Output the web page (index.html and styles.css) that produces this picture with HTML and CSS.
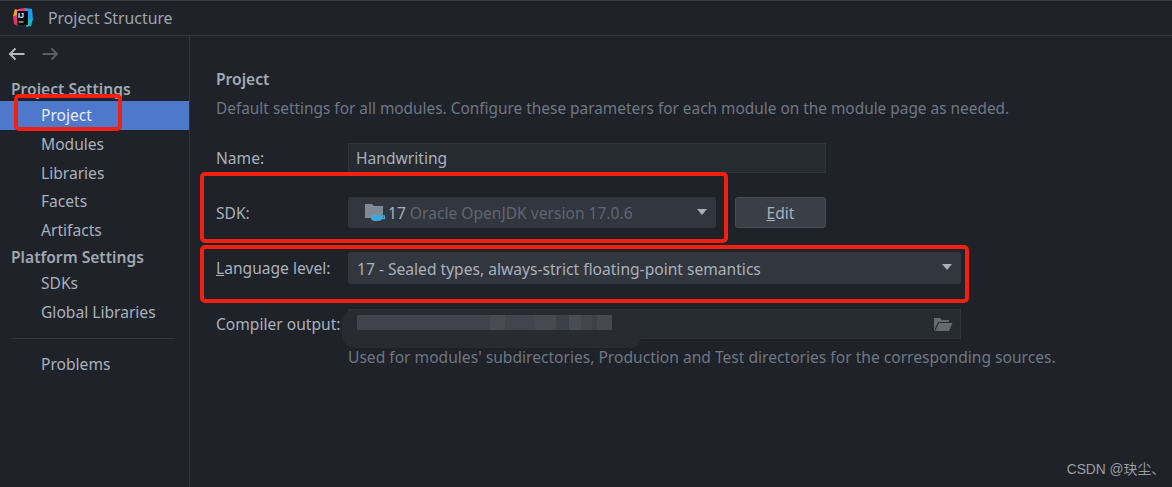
FILE: index.html
```html
<!DOCTYPE html>
<html lang="en">
  <head>
    <meta charset="UTF-8" />
    <title>Project Structure</title>
    <link rel="stylesheet" href="styles.css">
  </head>
  <body>
    <header class="titlebar">
      <svg class="app-logo" width="22" height="22" viewBox="0 0 22 22">
        <path d="M6 2 L14 1 L17 5 L5 8 Z" fill="#f5327f" />
        <path d="M3 2 L8 4 L5 11 L1 9 Z" fill="#f9a11b" />
        <path d="M1 9 L6 8 L6 19 L2 17 Z" fill="#ee2f6f" />
        <path d="M13 1 L20 2 L21 13 L15 12 Z" fill="#1b9cf2" />
        <path d="M15 11 L21 12 L19 19 L14 20 Z" fill="#16b5c9" />
        <rect x="5" y="4" width="11" height="14" fill="#0a0a0a" />
        <text class="logo-text" x="6" y="11">IJ</text>
        <rect x="6.5" y="14.5" width="5" height="1" fill="#e8e8e8" />
      </svg>
      <span class="title-text">Project Structure</span>
    </header>

    <div class="window">
      <aside class="sidebar">
        <div class="nav-arrows">
          <svg width="18" height="14" viewBox="0 0 18 14">
            <path d="M16.5 7 H2 M7.5 1.5 L2 7 L7.5 12.5" fill="none" stroke="#b4b8bf" stroke-width="2" />
          </svg>
          <svg width="18" height="14" viewBox="0 0 18 14">
            <path d="M1.5 7 H16 M10.5 1.5 L16 7 L10.5 12.5" fill="none" stroke="#5a5e65" stroke-width="2" />
          </svg>
        </div>

        <h4 class="nav-heading first">Project Settings</h4>
        <ul class="nav-list">
          <li class="active">Project</li>
          <li>Modules</li>
          <li>Libraries</li>
          <li>Facets</li>
          <li>Artifacts</li>
        </ul>

        <h4 class="nav-heading">Platform Settings</h4>
        <ul class="nav-list">
          <li>SDKs</li>
          <li>Global Libraries</li>
        </ul>

        <hr class="nav-sep" />

        <ul class="nav-list">
          <li>Problems</li>
        </ul>
      </aside>

      <main class="content">
        <h3 class="page-title">Project</h3>
        <p class="page-desc">Default settings for all modules. Configure these parameters for each module on the module page as needed.</p>

        <div class="form-row row-name">
          <label>Name:</label>
          <div class="field field-name">Handwriting</div>
        </div>

        <div class="form-row row-sdk">
          <label>SDK:</label>
          <div class="combo combo-sdk">
            <svg class="sdk-icon" width="21" height="19" viewBox="0 0 21 19">
              <path d="M0 1 H7 L9 3 H18 V15 H0 Z" fill="#818994" />
              <path d="M6 12 H17 V15 Q17 18 13 18 H10 Q6 18 6 15 Z" fill="#3ea8de" />
              <path d="M17 13 H19.5 V15.5 H16.5" fill="none" stroke="#3ea8de" stroke-width="1.3" />
            </svg>
            <span>17</span>
            <span class="muted">Oracle OpenJDK version 17.0.6</span>
            <i class="caret"></i>
          </div>
          <button class="btn"><u>E</u>dit</button>
        </div>

        <div class="form-row row-lang">
          <label><u>L</u>anguage level:</label>
          <div class="combo combo-lang">
            <span>17 - Sealed types, always-strict floating-point semantics</span>
            <i class="caret"></i>
          </div>
        </div>

        <div class="form-row row-output">
          <label>Compiler output:</label>
          <div class="field field-output">
            <svg class="open-folder" width="20" height="15" viewBox="0 0 20 15">
              <path d="M1 14 V1 H7 L9 3 H16 V5 H5 L1 14 Z" fill="#646a70" />
              <path d="M2 14 L6 6 H19.5 L16 14 Z" fill="#646a70" />
            </svg>
          </div>
        </div>

        <p class="help-text">Used for modules' subdirectories, Production and Test directories for the corresponding sources.</p>
      </main>
    </div>

    <!-- things drawn on top of the screenshot -->
    <div class="blur-blob"></div>
    <div class="blur-bar"></div>
    <div class="mark mark-project"></div>
    <div class="mark mark-sdk"></div>
    <div class="mark mark-lang"></div>
    <div class="watermark">CSDN @玦尘、</div>
  </body>
</html>
```

FILE: styles.css
```css
html, body {
  height: 100%;
}
body {
  margin: 0;
  position: relative;
  overflow: hidden;
  display: flex;
  flex-direction: column;
  background-color: #1f2229;
  color: #a9b1bc;
  font-family: "Noto Sans", "Open Sans", sans-serif;
  font-size: 15.6px;
  line-height: 20px;
}
.titlebar {
  height: 36px;
  flex: none;
  box-sizing: border-box;
  display: flex;
  align-items: center;
  padding-left: 12px;
  border-top: 1px solid #3a3d44;
  border-bottom: 1px solid #32353b;
  background-color: #1f2229;
}
.app-logo {
  margin-right: 14px;
}
.logo-text {
  font-family: "Liberation Sans", sans-serif;
  font-size: 7px;
  font-weight: bold;
  fill: #fff;
}
.title-text {
  color: #9ea5af;
  font-size: 15.8px;
}
.window {
  flex: 1;
  display: flex;
}
.sidebar {
  width: 189px;
  flex: none;
  border-right: 1px solid #32353b;
}
.nav-arrows {
  display: flex;
  gap: 15px;
  padding: 11px 0 0 8px;
  height: 18px;
}
.nav-heading {
  margin: 0;
  padding-left: 11px;
  font-size: 15.6px;
  font-weight: 600;
  color: #a0a7b1;
  height: 24px;
  line-height: 24px;
}
.nav-heading.first {
  margin-top: 12px;
  height: 24px;
}
.nav-list {
  list-style: none;
  margin: 0;
  padding: 0;
}
.nav-list li {
  height: 28.75px;
  line-height: 28.75px;
  padding-left: 41px;
}
.nav-list li.active {
  background-color: #4d78cc;
  color: #e8ecf3;
}
.nav-sep {
  border: 0;
  border-top: 1px solid #32353b;
  margin: 12px 14px 11px 12px;
}
.content {
  flex: 1;
  padding: 33px 0 0 26px;
}
.page-title {
  margin: 0;
  font-size: 15.6px;
  font-weight: 600;
  color: #a3aab4;
}
.page-desc {
  margin: 10px 0 0;
  color: #6f7783;
  font-size: 15.4px;
}
.form-row {
  display: flex;
  align-items: center;
}
.form-row label {
  width: 132px;
  flex: none;
  white-space: nowrap;
}
.row-name {
  margin-top: 24px;
}
.row-sdk {
  margin-top: 24px;
}
.row-lang {
  margin-top: 24px;
}
.row-output {
  margin-top: 25px;
}
.field {
  box-sizing: border-box;
  height: 30px;
  display: flex;
  align-items: center;
  border: 1px solid #2f333a;
  background-color: #262a31;
  padding-left: 7px;
}
.field-name {
  width: 478px;
}
.field-output {
  width: 613px;
  justify-content: flex-end;
  padding-right: 7px;
}
.combo {
  box-sizing: border-box;
  height: 31px;
  display: flex;
  align-items: center;
  gap: 5px;
  position: relative;
  background-color: #32363e;
  border-radius: 3px;
}
.combo-sdk {
  width: 368px;
  padding-left: 17px;
  gap: 4px;
}
.combo-lang {
  width: 613px;
  height: 32px;
  padding-left: 9px;
  padding-top: 1px;
}
.sdk-icon {
  margin-right: -2px;
}
.muted {
  color: #5f6671;
}
.caret {
  position: absolute;
  right: 9px;
  top: 12px;
  border-left: 5.5px solid transparent;
  border-right: 5.5px solid transparent;
  border-top: 6px solid #a9b1bc;
}
.btn {
  box-sizing: border-box;
  width: 91px;
  height: 31px;
  margin-left: 19px;
  border: 1px solid #484d55;
  border-radius: 3px;
  background-color: #3a3e46;
  color: #a9b1bc;
  font: inherit;
}
.help-text {
  margin: 8px 0 0 132px;
  color: #6f7783;
}
.blur-blob {
  position: absolute;
  left: 342px;
  top: 310px;
  width: 300px;
  height: 38px;
  border-radius: 13px;
  background-color: #282b31;
}
.blur-bar {
  position: absolute;
  left: 357px;
  top: 315px;
  width: 255px;
  height: 15px;
  background: linear-gradient(90deg, #41444c 0 52%, #484b52 52% 58%, #42454d 58% 70%, #474a51 70% 78%, #3c4149 78% 83%, #4a4c53 83% 88%, #43464d 88% 92%, #3d4149 92% 94%, #464950 94%);
}
.mark {
  position: absolute;
  box-sizing: border-box;
  border: 4px solid #f2200f;
  border-radius: 5px;
}
.mark-project {
  left: 14px;
  top: 94px;
  width: 108px;
  height: 37px;
}
.mark-sdk {
  left: 200px;
  top: 172px;
  width: 528px;
  height: 71px;
}
.mark-lang {
  left: 200px;
  top: 245px;
  width: 769px;
  height: 58px;
}
.watermark {
  position: absolute;
  right: 7px;
  top: 460px;
  color: #9a9da2;
  font-family: "Liberation Sans", "Noto Sans CJK SC", sans-serif;
  font-size: 13.8px;
}
```
